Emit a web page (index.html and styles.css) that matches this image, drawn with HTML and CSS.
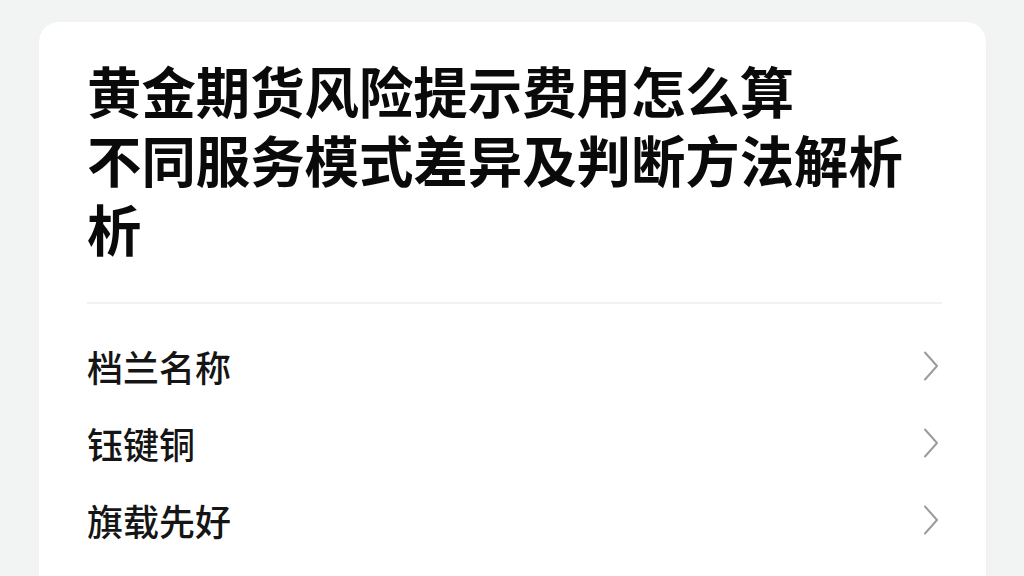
FILE: index.html
```html
<!DOCTYPE html>
<html lang="zh-CN">
<head>
<meta charset="utf-8">
<title>黄金期货风险提示费用怎么算</title>
<link rel="stylesheet" href="styles.css">
</head>
<body>
<main class="card">
  <h1 class="title">黄金期货风险提示费用怎么算<br>不同服务模式差异及判断方法解析析</h1>
  <hr class="divider">
  <ul class="list">
    <li class="row"><span class="label">档兰名称</span><svg class="chev" viewBox="0 0 24 30" width="24" height="30"><path d="M9 1.5 L21 15 L9 28.5" fill="none" stroke="#9c9c9c" stroke-width="2" stroke-linecap="round" stroke-linejoin="round"/></svg></li>
    <li class="row"><span class="label">钰键铜</span><svg class="chev" viewBox="0 0 24 30" width="24" height="30"><path d="M9 1.5 L21 15 L9 28.5" fill="none" stroke="#9c9c9c" stroke-width="2" stroke-linecap="round" stroke-linejoin="round"/></svg></li>
    <li class="row"><span class="label">旗载先好</span><svg class="chev" viewBox="0 0 24 30" width="24" height="30"><path d="M9 1.5 L21 15 L9 28.5" fill="none" stroke="#9c9c9c" stroke-width="2" stroke-linecap="round" stroke-linejoin="round"/></svg></li>
  </ul>
</main>
</body>
</html>
```

FILE: styles.css
```css
html, body {
  margin: 0;
  padding: 0;
  background: #f2f3f3;
  height: 100%;
  overflow: hidden;
}
body {
  font-family: "Noto Sans CJK SC", "Noto Sans", sans-serif;
  color: #111;
  padding: 22px 38px 0 39px;
  box-sizing: border-box;
}
.card {
  background: #fff;
  border-radius: 20px;
  padding: 33px 44px 40px 48px;
  min-height: 600px;
  box-shadow: 0 1px 3px rgba(0,0,0,0.03);
}
.title {
  margin: 0;
  font-size: 54.4px;
  line-height: 69px;
  font-weight: 700;
  color: #0a0a0a;
  letter-spacing: 0;
}
.divider {
  border: 0;
  height: 2px;
  background: #f1f1f1;
  margin: 40px 0 23px 0;
}
.list {
  list-style: none;
  margin: 0;
  padding: 0;
}
.row {
  height: 77px;
  display: flex;
  align-items: center;
  justify-content: space-between;
}
.label {
  font-size: 36px;
  font-weight: 500;
  color: #151515;
  line-height: 1;
}
.chev {
  display: block;
  margin-right: 2px;
}
```
